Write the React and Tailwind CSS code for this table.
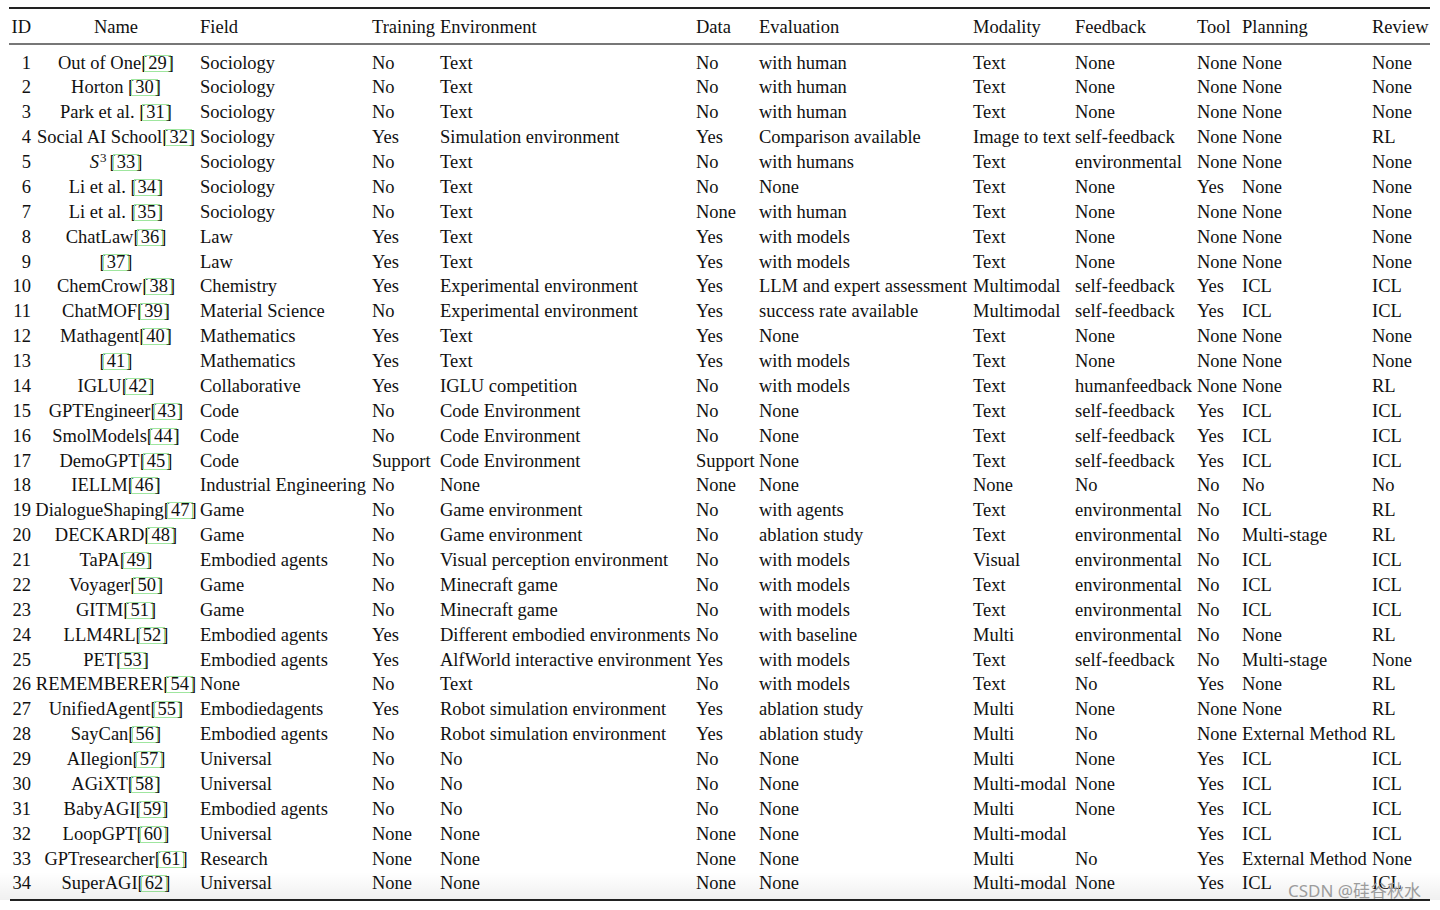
const COLS = 'grid grid-cols-[25px_164px_172px_68px_256px_63px_214px_102px_122px_45px_130px_60px]';

const rows = [
  [1, ['Out of One', 29], 'Sociology', 'No', 'Text', 'No', 'with human', 'Text', 'None', 'None', 'None', 'None'],
  [2, ['Horton ', 30], 'Sociology', 'No', 'Text', 'No', 'with human', 'Text', 'None', 'None', 'None', 'None'],
  [3, ['Park et al. ', 31], 'Sociology', 'No', 'Text', 'No', 'with human', 'Text', 'None', 'None', 'None', 'None'],
  [4, ['Social AI School', 32], 'Sociology', 'Yes', 'Simulation environment', 'Yes', 'Comparison available', 'Image to text', 'self-feedback', 'None', 'None', 'RL'],
  [5, ['S3', 33], 'Sociology', 'No', 'Text', 'No', 'with humans', 'Text', 'environmental', 'None', 'None', 'None'],
  [6, ['Li et al. ', 34], 'Sociology', 'No', 'Text', 'No', 'None', 'Text', 'None', 'Yes', 'None', 'None'],
  [7, ['Li et al. ', 35], 'Sociology', 'No', 'Text', 'None', 'with human', 'Text', 'None', 'None', 'None', 'None'],
  [8, ['ChatLaw', 36], 'Law', 'Yes', 'Text', 'Yes', 'with models', 'Text', 'None', 'None', 'None', 'None'],
  [9, ['', 37], 'Law', 'Yes', 'Text', 'Yes', 'with models', 'Text', 'None', 'None', 'None', 'None'],
  [10, ['ChemCrow', 38], 'Chemistry', 'Yes', 'Experimental environment', 'Yes', 'LLM and expert assessment', 'Multimodal', 'self-feedback', 'Yes', 'ICL', 'ICL'],
  [11, ['ChatMOF', 39], 'Material Science', 'No', 'Experimental environment', 'Yes', 'success rate available', 'Multimodal', 'self-feedback', 'Yes', 'ICL', 'ICL'],
  [12, ['Mathagent', 40], 'Mathematics', 'Yes', 'Text', 'Yes', 'None', 'Text', 'None', 'None', 'None', 'None'],
  [13, ['', 41], 'Mathematics', 'Yes', 'Text', 'Yes', 'with models', 'Text', 'None', 'None', 'None', 'None'],
  [14, ['IGLU', 42], 'Collaborative', 'Yes', 'IGLU competition', 'No', 'with models', 'Text', 'humanfeedback', 'None', 'None', 'RL'],
  [15, ['GPTEngineer', 43], 'Code', 'No', 'Code Environment', 'No', 'None', 'Text', 'self-feedback', 'Yes', 'ICL', 'ICL'],
  [16, ['SmolModels', 44], 'Code', 'No', 'Code Environment', 'No', 'None', 'Text', 'self-feedback', 'Yes', 'ICL', 'ICL'],
  [17, ['DemoGPT', 45], 'Code', 'Support', 'Code Environment', 'Support', 'None', 'Text', 'self-feedback', 'Yes', 'ICL', 'ICL'],
  [18, ['IELLM', 46], 'Industrial Engineering', 'No', 'None', 'None', 'None', 'None', 'No', 'No', 'No', 'No'],
  [19, ['DialogueShaping', 47], 'Game', 'No', 'Game environment', 'No', 'with agents', 'Text', 'environmental', 'No', 'ICL', 'RL'],
  [20, ['DECKARD', 48], 'Game', 'No', 'Game environment', 'No', 'ablation study', 'Text', 'environmental', 'No', 'Multi-stage', 'RL'],
  [21, ['TaPA', 49], 'Embodied agents', 'No', 'Visual perception environment', 'No', 'with models', 'Visual', 'environmental', 'No', 'ICL', 'ICL'],
  [22, ['Voyager', 50], 'Game', 'No', 'Minecraft game', 'No', 'with models', 'Text', 'environmental', 'No', 'ICL', 'ICL'],
  [23, ['GITM', 51], 'Game', 'No', 'Minecraft game', 'No', 'with models', 'Text', 'environmental', 'No', 'ICL', 'ICL'],
  [24, ['LLM4RL', 52], 'Embodied agents', 'Yes', 'Different embodied environments', 'No', 'with baseline', 'Multi', 'environmental', 'No', 'None', 'RL'],
  [25, ['PET', 53], 'Embodied agents', 'Yes', 'AlfWorld interactive environment', 'Yes', 'with models', 'Text', 'self-feedback', 'No', 'Multi-stage', 'None'],
  [26, ['REMEMBERER', 54], 'None', 'No', 'Text', 'No', 'with models', 'Text', 'No', 'Yes', 'None', 'RL'],
  [27, ['UnifiedAgent', 55], 'Embodiedagents', 'Yes', 'Robot simulation environment', 'Yes', 'ablation study', 'Multi', 'None', 'None', 'None', 'RL'],
  [28, ['SayCan', 56], 'Embodied agents', 'No', 'Robot simulation environment', 'Yes', 'ablation study', 'Multi', 'No', 'None', 'External Method', 'RL'],
  [29, ['AIlegion', 57], 'Universal', 'No', 'No', 'No', 'None', 'Multi', 'None', 'Yes', 'ICL', 'ICL'],
  [30, ['AGiXT', 58], 'Universal', 'No', 'No', 'No', 'None', 'Multi-modal', 'None', 'Yes', 'ICL', 'ICL'],
  [31, ['BabyAGI', 59], 'Embodied agents', 'No', 'No', 'No', 'None', 'Multi', 'None', 'Yes', 'ICL', 'ICL'],
  [32, ['LoopGPT', 60], 'Universal', 'None', 'None', 'None', 'None', 'Multi-modal', '', 'Yes', 'ICL', 'ICL'],
  [33, ['GPTresearcher', 61], 'Research', 'None', 'None', 'None', 'None', 'Multi', 'No', 'Yes', 'External Method', 'None'],
  [34, ['SuperAGI', 62], 'Universal', 'None', 'None', 'None', 'None', 'Multi-modal', 'None', 'Yes', 'ICL', 'ICL'],
];

const headers = ['Field', 'Training', 'Environment', 'Data', 'Evaluation', 'Modality', 'Feedback', 'Tool', 'Planning', 'Review'];

const Cite = ({ n }) => (
  <>
    [
    <span className="inline-block box-border h-[17px] border border-[#9fe69f] px-[3px] -mx-[3px] leading-[15px]">
      {n}
    </span>
    ]
  </>
);

const Name = ({ label, n }) => {
  if (label === 'S3') {
    return (
      <>
        <i>S</i>
        <sup className="text-[13px] ml-[1px] mr-[3px]">3</sup>
        <Cite n={n} />
      </>
    );
  }
  return (
    <>
      {label}
      <Cite n={n} />
    </>
  );
};

export default function App() {
  return (
    <div className="relative w-[1440px] h-[910px] bg-white overflow-hidden font-['Liberation_Serif',serif] text-[18.5px] text-[#111] whitespace-nowrap">
      <div className="ml-[9px] w-[1421px] pt-[7px]">
        <div className="h-[2px] bg-[#222]" />
        <div className={`${COLS} box-border h-[34px] pt-[4px] items-center`}>
          <div className="text-right pr-[3px]">ID</div>
          <div className="text-center">Name</div>
          {headers.map((h) => (
            <div key={h} className="pl-[2px]">{h}</div>
          ))}
        </div>
        <div className="h-[1.5px] bg-[#777]" />
        <div className="pt-[5px] pb-[3.5px]">
          {rows.map(([id, [label, n], ...rest]) => (
            <div key={id} className={`${COLS} h-[24.88px] items-center`}>
              <div className="text-right pr-[3px]">{id}</div>
              <div className="text-center">
                <Name label={label} n={n} />
              </div>
              {rest.map((c, i) => (
                <div key={i} className="pl-[2px]">{c}</div>
              ))}
            </div>
          ))}
        </div>
        <div className="ml-[1px] h-[2.5px] bg-[#222]" />
      </div>

      <div className="pointer-events-none absolute left-0 right-0 top-[872px] h-[28px] bg-linear-to-b from-transparent to-black/[0.06]" />

      <div className="pointer-events-none absolute left-[1288px] top-[879px] text-[17px] leading-[24px] text-[#9c9c9c] font-['Noto_Sans','Noto_Sans_CJK_SC',sans-serif]">
        CSDN @硅谷秋水
      </div>
    </div>
  );
}
